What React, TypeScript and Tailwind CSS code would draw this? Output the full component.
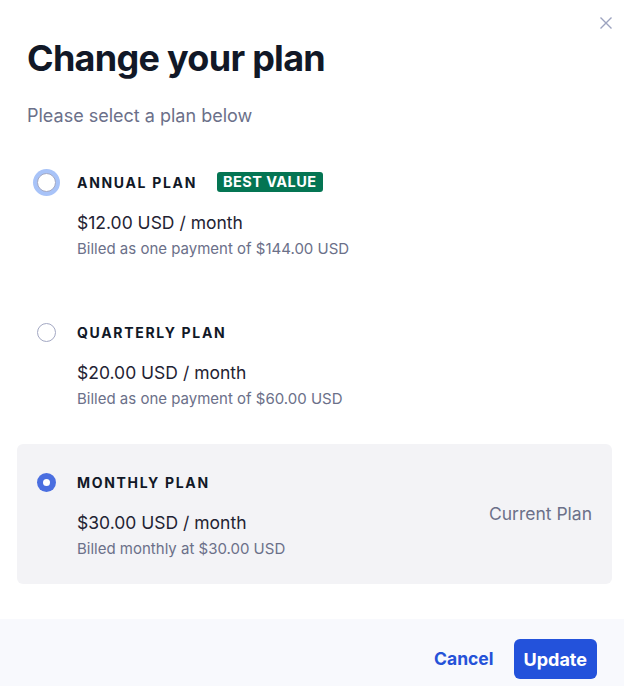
import { useState } from 'react'

interface Plan {
  id: string
  name: string
  price: string
  billed: string
  badge?: string
  current?: boolean
}

const plans: Plan[] = [
  {
    id: 'annual',
    name: 'Annual Plan',
    price: '$12.00 USD / month',
    billed: 'Billed as one payment of $144.00 USD',
    badge: 'Best Value',
  },
  {
    id: 'quarterly',
    name: 'Quarterly Plan',
    price: '$20.00 USD / month',
    billed: 'Billed as one payment of $60.00 USD',
  },
  {
    id: 'monthly',
    name: 'Monthly Plan',
    price: '$30.00 USD / month',
    billed: 'Billed monthly at $30.00 USD',
    current: true,
  },
]

function Radio({ checked, focused }: { checked: boolean; focused: boolean }) {
  if (checked) {
    return (
      <span className="flex h-[19px] w-[19px] items-center justify-center rounded-full bg-[#4a6ee0]">
        <span className="h-[7px] w-[7px] rounded-full bg-white" />
      </span>
    )
  }
  return (
    <span
      className={
        focused
          ? 'block h-[19px] w-[19px] rounded-full border border-[#a3a8c3] bg-white ring-[4px] ring-[#a8c3f8]'
          : 'block h-[19px] w-[19px] rounded-full border border-[#a3a8c3] bg-white'
      }
    />
  )
}

export default function App() {
  const [selected, setSelected] = useState('monthly')

  return (
    <div
      className="relative min-h-[686px] w-full bg-white text-[#111827]"
      style={{ fontFamily: 'Inter, "Noto Sans", sans-serif' }}
    >
      <button
        type="button"
        aria-label="Close"
        className="absolute right-[11px] top-[16px] flex h-[14px] w-[14px] items-center justify-center text-[#9ca3bf]"
      >
        <svg width="14" height="14" viewBox="0 0 14 14" fill="none" stroke="currentColor" strokeWidth="1.4">
          <path d="M1.5 1.5l11 11M12.5 1.5l-11 11" />
        </svg>
      </button>

      <div className="px-[27px] pt-[37px]">
        <h2 className="text-[36px] font-bold leading-[42px] tracking-[-0.02em] text-[#111827]">
          Change your plan
        </h2>
        <p className="mt-[24px] text-[18px] leading-[26px] text-[#6b7089]">Please select a plan below</p>
      </div>

      <div className="mt-[15px] flex flex-col gap-[10px] pl-[17px] pr-[12px]">
        {plans.map((plan) => {
          const checked = selected === plan.id
          return (
            <div
              key={plan.id}
              onClick={() => setSelected(plan.id)}
              className={
                plan.current
                  ? 'flex h-[140px] cursor-pointer items-center rounded-[6px] bg-[#f3f3f6] pl-[20px] pr-[20px]'
                  : 'flex h-[140px] cursor-pointer items-center rounded-[6px] bg-white pl-[20px] pr-[20px]'
              }
            >
              <div className="flex h-full flex-1 pt-[28px]">
                <div className="flex h-[20px] w-[40px] items-center">
                  <Radio checked={checked} focused={plan.id === 'annual'} />
                </div>
                <div className="flex flex-col">
                  <div className="flex h-[20px] items-center gap-[20px]">
                    <span className="text-[14px] font-bold uppercase tracking-[0.12em] text-[#111827]">
                      {plan.name}
                    </span>
                    {plan.badge && (
                      <span className="rounded-[3px] bg-[#047553] px-[6px] text-[14.5px] font-bold uppercase leading-[20px] tracking-[0.03em] text-white">
                        {plan.badge}
                      </span>
                    )}
                  </div>
                  <div className="mt-[17px] text-[17.5px] leading-[28px] text-[#1f2333]">{plan.price}</div>
                  <div className="mt-[2px] text-[15px] leading-[20px] text-[#6b7089]">{plan.billed}</div>
                </div>
              </div>
              {plan.current && <span className="text-[17.5px] text-[#6b7089]">Current Plan</span>}
            </div>
          )
        })}
      </div>

      <div className="mt-[35px] flex items-center justify-end gap-[20px] bg-[#f8f9fd] px-[27px] pb-[20px] pt-[20px]">
        <button type="button" className="text-[17.5px] font-bold text-[#2552d8]">
          Cancel
        </button>
        <button
          type="button"
          className="h-[40px] rounded-[6px] bg-[#2352db] px-[10px] text-[18px] font-bold text-white"
        >
          Update
        </button>
      </div>
    </div>
  )
}
